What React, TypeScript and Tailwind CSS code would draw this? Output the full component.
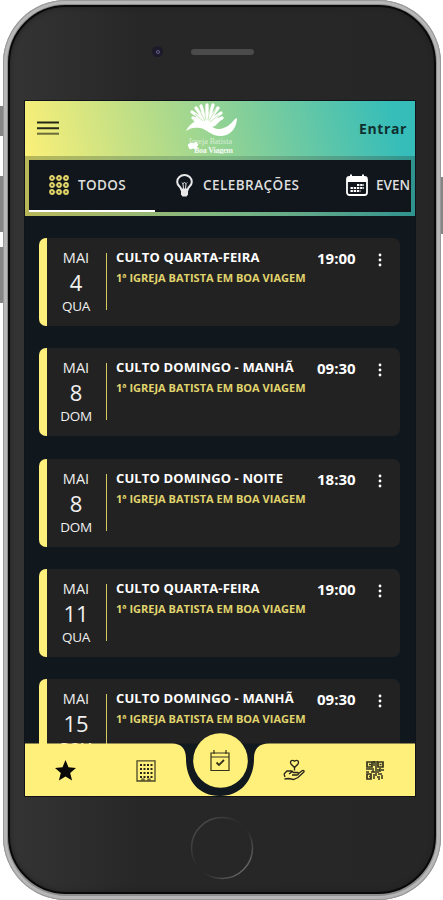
import React from "react";

interface Service {
  day: string;
  weekday: string;
  title: string;
  time: string;
}

const services: Service[] = [
  { day: "4", weekday: "QUA", title: "CULTO QUARTA-FEIRA", time: "19:00" },
  { day: "8", weekday: "DOM", title: "CULTO DOMINGO - MANHÃ", time: "09:30" },
  { day: "8", weekday: "DOM", title: "CULTO DOMINGO - NOITE", time: "18:30" },
  { day: "11", weekday: "QUA", title: "CULTO QUARTA-FEIRA", time: "19:00" },
  { day: "15", weekday: "DOM", title: "CULTO DOMINGO - MANHÃ", time: "09:30" },
];

const GridIcon: React.FC = () => (
  <svg width="20" height="20" viewBox="0 0 20 20" fill="none" stroke="#e0d468" strokeWidth="1.8">
    <path d="M3 3h14M3 10h14M3 17h14" strokeWidth="1" opacity=".5" />
    {[3, 10, 17].map((y) =>
      [3, 10, 17].map((x) => <circle key={`${x}-${y}`} cx={x} cy={y} r="2" fill="#4a4733" />),
    )}
  </svg>
);

const BulbIcon: React.FC = () => (
  <svg width="17" height="23" viewBox="0 0 17 23" fill="none" stroke="#e8e8e8" strokeWidth="2">
    <path d="M5.200 15.500c0-2.600-4-3.700-4-7.600a7.300 6.800 0 0 1 14.600 0c0 3.900-4 5-4 7.600z" />
    <path d="M5.800 8.500l1.200 1.200 1.500-1.200 1.500 1.200 1.200-1.200M7 10l.6 6M10 10l-.6 6" strokeWidth="1" />
    <path d="M5 15h7v5.500l-1.500 2h-4l-1.500-2z" fill="#e8e8e8" stroke="none" />
  </svg>
);

const CalendarIcon: React.FC = () => (
  <svg width="22" height="22" viewBox="0 0 22 22">
    <rect x="1" y="3" width="20" height="18" rx="2.500" fill="none" stroke="#fff" strokeWidth="1.800" />
    <path d="M1 8V5a2 2 0 0 1 2-2h16a2 2 0 0 1 2 2v3z" fill="#fff" />
    <path d="M5 .500v4M17 .500v4" stroke="#fff" strokeWidth="2" />
    <path d="M11 11h7M4.500 14h13.500M4.500 17h10" stroke="#fff" strokeWidth="2.200" strokeDasharray="2.400 .8" />
  </svg>
);

const ChurchLogo: React.FC = () => (
  <svg width="54" height="52" viewBox="0 0 54 52" fill="#fff">
    <path
      d="M20 20L8 16M20 19L7 10M20 18L11 6M21 18L16 4M22 18L22 3M23 18L28 3M24 18L33 6M25 19L36 11M26 21L37 16"
      fill="none"
      stroke="#fff"
      strokeWidth="3.300"
      strokeLinecap="round"
    />
    <path d="M8 19l4-5h19l5 4-6 6c-7 3-12-2-22-5z" />
    <path
      d="M10 12l8 7M14 7l6 12M19 6l2 12M25 6l-2 12M31 7l-7 12M34 13l-9 7"
      fill="none"
      stroke="#a4d98d"
      strokeWidth=".6"
    />
    <path d="M1 29C5 21 11 18 17 19c8 1 10 9 18 8 6-1 10-4 15-10l2-1c0 8-5 17-15 18-10 1-15-7-22-8-6-1-10 0-14 3z" />
    <path d="M3 43l3-2 3 1 2-2 2 3-2 2 1 2-4-1-3 1z" stroke="#fff" strokeWidth="1" />
    <text x="4" y="42" textLength="43" fontSize="8" opacity=".6" fontFamily="Liberation Serif, serif">
      Igreja Batista
    </text>
    <text x="9" y="50.500" textLength="39" fontSize="8" fontWeight="700" opacity=".9" fontFamily="Liberation Serif, serif">
      Boa Viagem
    </text>
  </svg>
);

const TopBar: React.FC = () => (
  <header className="flex h-[55px] shrink-0 items-start pr-[8px] pl-[12px]">
    <svg className="mt-[20px]" width="22" height="15" viewBox="0 0 22 15" stroke="#252818">
      <path d="M0 1.500h22M0 7.200h22" strokeWidth="2" />
      <path d="M0 12.700h22" strokeWidth="2" opacity=".65" />
    </svg>
    <div className="mt-[1px] ml-[126px]">
      <ChurchLogo />
    </div>
    <span className="mt-[18px] ml-auto text-[14px] leading-5 font-bold tracking-[0.6px] text-[#10302f]">
      Entrar
    </span>
  </header>
);

const Tabs: React.FC = () => (
  <div className="h-[60px] shrink-0 bg-linear-to-r from-[#b8b758] via-[#7fb782] to-[#2e938f] px-[4px] pt-[4px] pb-[4px]">
    <div className="flex h-full overflow-hidden bg-[#11161c] text-[13.500px] font-semibold text-[#dedede]">
      <div className="flex w-[126px] shrink-0 items-center border-b-2 border-white pl-[20px]">
        <GridIcon />
        <span className="ml-[9px] tracking-[0.400px]">TODOS</span>
      </div>
      <div className="flex w-[191px] shrink-0 items-center pb-[2px] pl-[21px]">
        <BulbIcon />
        <span className="ml-[10px] tracking-[0.450px]">CELEBRAÇÕES</span>
      </div>
      <div className="flex shrink-0 items-center pb-[2px]">
        <CalendarIcon />
        <span className="ml-[8px]">EVEN</span>
      </div>
    </div>
  </div>
);

const ServiceCard: React.FC<{ service: Service }> = ({ service }) => (
  <article className="flex h-[88px] shrink-0 overflow-hidden rounded-[7px] bg-[#222223]">
    <div className="w-[8px] shrink-0 bg-[#fff07c]" />
    <div className="flex w-[58px] shrink-0 flex-col items-center pt-[9px] text-[#f0f0f0]">
      <span className="text-[14.500px] leading-[22px] font-medium">MAI</span>
      <span className="text-[22px] leading-[27px] font-medium">{service.day}</span>
      <span className="text-[13.500px] leading-[20px] font-medium tracking-[-0.3px]">{service.weekday}</span>
    </div>
    <div className="mt-[15px] ml-px h-[57px] w-px shrink-0 bg-[#d8ca62]" />
    <div className="w-[202px] shrink-0 pt-[10px] pl-[9px] whitespace-nowrap">
      <h3 className="text-[13px] leading-[19px] font-bold tracking-[0.120px] text-white">{service.title}</h3>
      <p className="text-[11px] leading-[21px] font-bold tracking-[0.010px] text-[#e0d46c]">
        1ª IGREJA BATISTA EM BOA VIAGEM
      </p>
    </div>
    <span className="w-[66px] pt-[10px] pl-[8px] text-[15px] leading-[20px] font-bold text-white">
      {service.time}
    </span>
    <svg className="mt-[15px]" width="10" height="14" viewBox="0 0 10 14" fill="#fff">
      <circle cx="5" cy="2" r="1.400" />
      <circle cx="5" cy="7" r="1.400" />
      <circle cx="5" cy="12" r="1.400" />
    </svg>
  </article>
);

const StarIcon: React.FC = () => (
  <svg width="21" height="21" viewBox="0 0 21 21" fill="#090909">
    <path d="M10.500 0l3 7.200 7.500.7-5.800 5 1.900 7.600-6.600-4.100-6.600 4.100 1.900-7.600L0 7.900l7.500-.7z" />
  </svg>
);

const BuildingIcon: React.FC = () => (
  <svg width="20" height="22" viewBox="0 0 20 22" fill="none" stroke="#4b4728">
    <path d="M1 .800h18V21H1z" strokeWidth="1.300" />
    <path d="M4 5h12.500M4 9h12.500M4 13h12.500M4 17h12.500" stroke="#292718" strokeWidth="2" strokeDasharray="2 1.500" />
    <path d="M6 21v-2h2v2M12 21v-2h2v2" strokeWidth="1.200" />
  </svg>
);

const DonateIcon: React.FC = () => (
  <svg width="22" height="22" viewBox="0 0 22 22" fill="none" stroke="#25231a" strokeWidth="1.300">
    <path d="M11.500 8.500L8 5C6.500 2 9 .500 11.500 2.200 14 .500 16.500 2 15 5z" />
    <path d="M11.500 8.500v3" />
    <path d="M1 15l3-3h4.500l2 1.500h4c1.500.3 1 2.500-.5 2.500H9M6 15l4-3" />
    <path d="M15 15l4-3.300c1.500-.9 2.800.5 1.600 1.600L15 18.500 10.500 20.500l-5-1-4 .5M1 15l1 3" />
  </svg>
);

const QrIcon: React.FC = () => (
  <svg width="18" height="20" viewBox="0 0 18 20" fill="none" stroke="#35321c">
    <path d="M1 2h5v5H1zM12 2h5v5h-5zM1 14h4v5H1z" strokeWidth="1.700" />
    <path d="M3 4.500h2M13.500 4.500h2M3 16.500h1M6 2h6M8 1v5M10 3v6M0 9h6M7 8v4M9 10h5M14 8v4M15 10h3M0 12h3M5 12h8M8 14v5M10 13v3M12 14h4M11 17h3M16 15v4M12 19h2" strokeWidth="1.500" />
  </svg>
);

const BottomNav: React.FC = () => (
  <nav className="absolute bottom-0 left-0 h-[63px] w-[390px]">
    <svg className="absolute inset-0" width="390" height="63" viewBox="0 0 390 63">
      <path
        d="M150 10.500C157 12 161 18 161 28A34 34 0 0 0 195 63A34 34 0 0 0 229 28C229 18 233 12 240 10.500z"
        fill="#11181e"
      />
      <path d="M0 10.500h147c9 0 14 5 14 15 0 20 11 37.500 34 37.500H0z" fill="#fff07c" />
      <path d="M390 10.500H244c-10 0-15 5-15 15 0 20-12 37.500-34 37.500h195z" fill="#fff07c" />
      <circle cx="195.500" cy="27.500" r="27.300" fill="#fff07c" />
    </svg>
    <div className="relative flex h-full pt-[26px]">
      <div className="flex w-[80px] justify-center pt-[1px]">
        <StarIcon />
      </div>
      <div className="flex w-[81px] justify-center pt-[1px]">
        <BuildingIcon />
      </div>
      <div className="flex w-[68px] justify-center">
        <svg className="-mt-[9px]" width="20" height="22" viewBox="0 0 20 22" fill="none" stroke="#35321c" strokeWidth="1.200">
          <path d="M1 3h18v17.500H1zM1 7h18M4 0v4M16 0v4" />
          <path d="M6.500 12.500l2.500 2.500 5-5" strokeWidth="1.800" />
        </svg>
      </div>
      <div className="flex w-[80px] justify-center">
        <DonateIcon />
      </div>
      <div className="flex w-[81px] justify-center pt-[1px]">
        <QrIcon />
      </div>
    </div>
  </nav>
);

const Screen: React.FC = () => (
  <main className="relative flex h-[695px] w-[390px] flex-col overflow-hidden bg-[#10171d]">
    <div className="h-[115px] shrink-0 bg-[linear-gradient(75deg,#fbf078_4%,#b6dc88_36%,#78cc9e_64%,#36bdb9_94%)]">
      <TopBar />
      <Tabs />
    </div>
    <div className="flex flex-col gap-[22.300px] pt-[22px] pr-[15px] pl-[14px]">
      {services.map((service) => (
        <ServiceCard key={`${service.day}-${service.title}`} service={service} />
      ))}
    </div>
    <BottomNav />
  </main>
);

export default function App() {
  return (
    <div className="relative h-[900px] w-[443px] overflow-hidden bg-white font-['Open_Sans','Noto_Sans',sans-serif]">
      <div className="absolute top-[106px] left-0 h-[30px] w-[5px] bg-[#858585]" />
      <div className="absolute top-[176px] left-0 h-[56px] w-[5px] bg-[#858585]" />
      <div className="absolute top-[247px] left-0 h-[56px] w-[5px] bg-[#858585]" />
      <div className="absolute top-[177px] right-0 h-[57px] w-[5px] bg-[#858585]" />
      <div className="absolute top-0 left-[60px] h-[3px] w-[326px] bg-[#929292]" />
      <div className="relative ml-[3px] h-[900px] w-[438px] rounded-[63px] bg-[#8d8d8d] px-[5px] pt-[5px] pb-[6px] shadow-[inset_0_0_0_1px_#999,inset_0_0_0_4px_#b7b7b7]">
        <div className="flex h-full flex-col items-center rounded-[58px] border-2 border-[#090909] bg-linear-to-r from-[#343434] via-[#272727] via-30% to-[#262626] shadow-[inset_0_0_5px_#202020]">
          <div className="relative flex h-[94px] w-full shrink-0 justify-center pt-[42px]">
            <div className="absolute top-[39px] left-[142px] flex size-[11px] items-center justify-center rounded-full bg-[#1c1a2b]">
              <div className="size-[4px] rounded-full border border-[#65618c]" />
            </div>
            <div className="h-[6px] w-[63px] rounded-full bg-[#4b4b4b]" />
          </div>
          <div className="shrink-0 -translate-x-[2px] outline-1 outline-[#11131a]">
            <Screen />
          </div>
          <svg className="mt-[20px]" width="64" height="64" viewBox="0 0 64 64" fill="none">
            <defs>
              <linearGradient id="ring" x1="0" y1="0" x2="1" y2="1">
                <stop offset="0" stopColor="#575757" />
                <stop offset=".45" stopColor="#272727" />
                <stop offset=".58" stopColor="#292929" />
                <stop offset="1" stopColor="#808080" />
              </linearGradient>
            </defs>
            <circle cx="32" cy="32" r="30.500" stroke="url(#ring)" strokeWidth="1.500" />
          </svg>
        </div>
      </div>
    </div>
  );
}
